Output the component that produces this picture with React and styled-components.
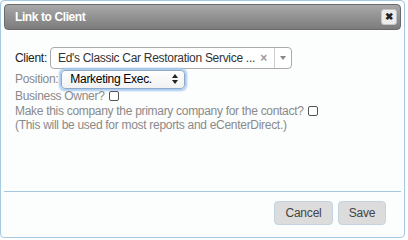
import React from 'react'
import styled, { createGlobalStyle } from 'styled-components'

const Global = createGlobalStyle`
  html, body { margin: 0; padding: 0; background: #fff; }
  body {
    font-family: "Liberation Sans", Arial, sans-serif;
    font-size: 12px;
    letter-spacing: -0.3px;
  }
`

const Dialog = styled.div`
  box-sizing: border-box;
  width: 405px;
  height: 238px;
  border: 1px solid #a6c9e2;
  border-radius: 4px;
  padding: 3px;
  background: #fcfdfd;
  display: flex;
  flex-direction: column;
`

const TitleBar = styled.div`
  height: 24px;
  border: 1px solid #6a6a6a;
  border-radius: 4px;
  background: linear-gradient(#a8a8a8, #7c7c7c);
  display: flex;
  align-items: center;
  justify-content: space-between;
  padding: 0 3px 0 10px;
  color: #fff;
  font-weight: bold;
  font-size: 12px;
  letter-spacing: -0.4px;
`

const CloseButton = styled.div`
  width: 14px;
  height: 14px;
  border: 1px solid #c5c5c5;
  border-radius: 3px;
  background: #ececec;
  display: flex;
  align-items: center;
  justify-content: center;
  color: #222;
  font-size: 10px;
  line-height: 1;
`

const Body = styled.div`
  flex: 1;
  padding: 17px 0 0 11px;
  color: #222;
`

const Row = styled.div`
  display: flex;
  align-items: center;
  height: ${p => p.h || 14.5}px;
  white-space: nowrap;
  color: ${p => (p.muted ? '#8a8a8a' : '#222')};
`

const Label = styled.span`
  margin-right: 3px;
`

const Combo = styled.div`
  box-sizing: border-box;
  width: 242px;
  height: 22px;
  border: 1px solid #aaa;
  border-radius: 4px;
  background: #fff;
  display: flex;
  align-items: center;
  padding-left: 7px;
  color: #333;
  overflow: hidden;
`

const ComboText = styled.span`
  flex: 1;
  white-space: nowrap;
  overflow: hidden;
`

const Clear = styled.span`
  color: #999;
  font-size: 12px;
  font-weight: bold;
  margin: 0 7px 0 4px;
`

const Arrow = styled.span`
  align-self: stretch;
  width: 16px;
  flex: none;
  border-left: 1px solid #ccc;
  display: flex;
  align-items: center;
  justify-content: center;
  &:after {
    content: '';
    border-left: 3px solid transparent;
    border-right: 3px solid transparent;
    border-top: 4px solid #888;
  }
`

const NativeSelect = styled.div`
  box-sizing: border-box;
  width: 124px;
  height: 19px;
  border: 1px solid #8fa9c8;
  border-radius: 4px;
  box-shadow: 0 0 2px 2px #a7cbf0;
  background: linear-gradient(#fff, #f1f1f1);
  display: flex;
  align-items: center;
  justify-content: space-between;
  padding: 0 6px 0 8px;
  color: #000;
  white-space: nowrap;
`

const Updown = styled.span`
  display: flex;
  flex-direction: column;
  gap: 2px;
  &:before, &:after {
    content: '';
    border-left: 3px solid transparent;
    border-right: 3px solid transparent;
  }
  &:before { border-bottom: 4px solid #222; }
  &:after { border-top: 4px solid #222; }
`

const Check = styled.span`
  display: inline-block;
  box-sizing: border-box;
  width: 10px;
  height: 10px;
  border: 1px solid #555;
  border-radius: 2px;
  margin-left: 4px;
  background: #fff;
`

const Footer = styled.div`
  border-top: 1px solid #a6c9e2;
  margin-top: auto;
  height: 42px;
  display: flex;
  align-items: center;
  justify-content: flex-end;
  gap: 5px;
  padding-right: 15px;
`

const Button = styled.button`
  box-sizing: border-box;
  height: 24px;
  width: ${p => p.w}px;
  border: 1px solid #c5d3e0;
  border-radius: 4px;
  background: #dcdcdc;
  color: #444;
  font-family: inherit;
  font-size: 12px;
  letter-spacing: -0.2px;
  padding: 0;
`

export default function App() {
  return (
    <>
      <Global />
      <Dialog>
        <TitleBar>
          <span>Link to Client</span>
          <CloseButton>✖</CloseButton>
        </TitleBar>
        <Body>
          <Row h={22}>
            <Label>Client:</Label>
            <Combo>
              <ComboText>Ed's Classic Car Restoration Service ...</ComboText>
              <Clear>×</Clear>
              <Arrow />
            </Combo>
          </Row>
          <Row h={20} muted>
            <Label>Position:</Label>
            <NativeSelect>
              <span>Marketing Exec.</span>
              <Updown />
            </NativeSelect>
          </Row>
          <Row muted>
            Business Owner?<Check />
          </Row>
          <Row muted>
            Make this company the primary company for the contact?<Check />
          </Row>
          <Row muted>(This will be used for most reports and eCenterDirect.)</Row>
        </Body>
        <Footer>
          <Button w={59}>Cancel</Button>
          <Button w={48}>Save</Button>
        </Footer>
      </Dialog>
    </>
  )
}
